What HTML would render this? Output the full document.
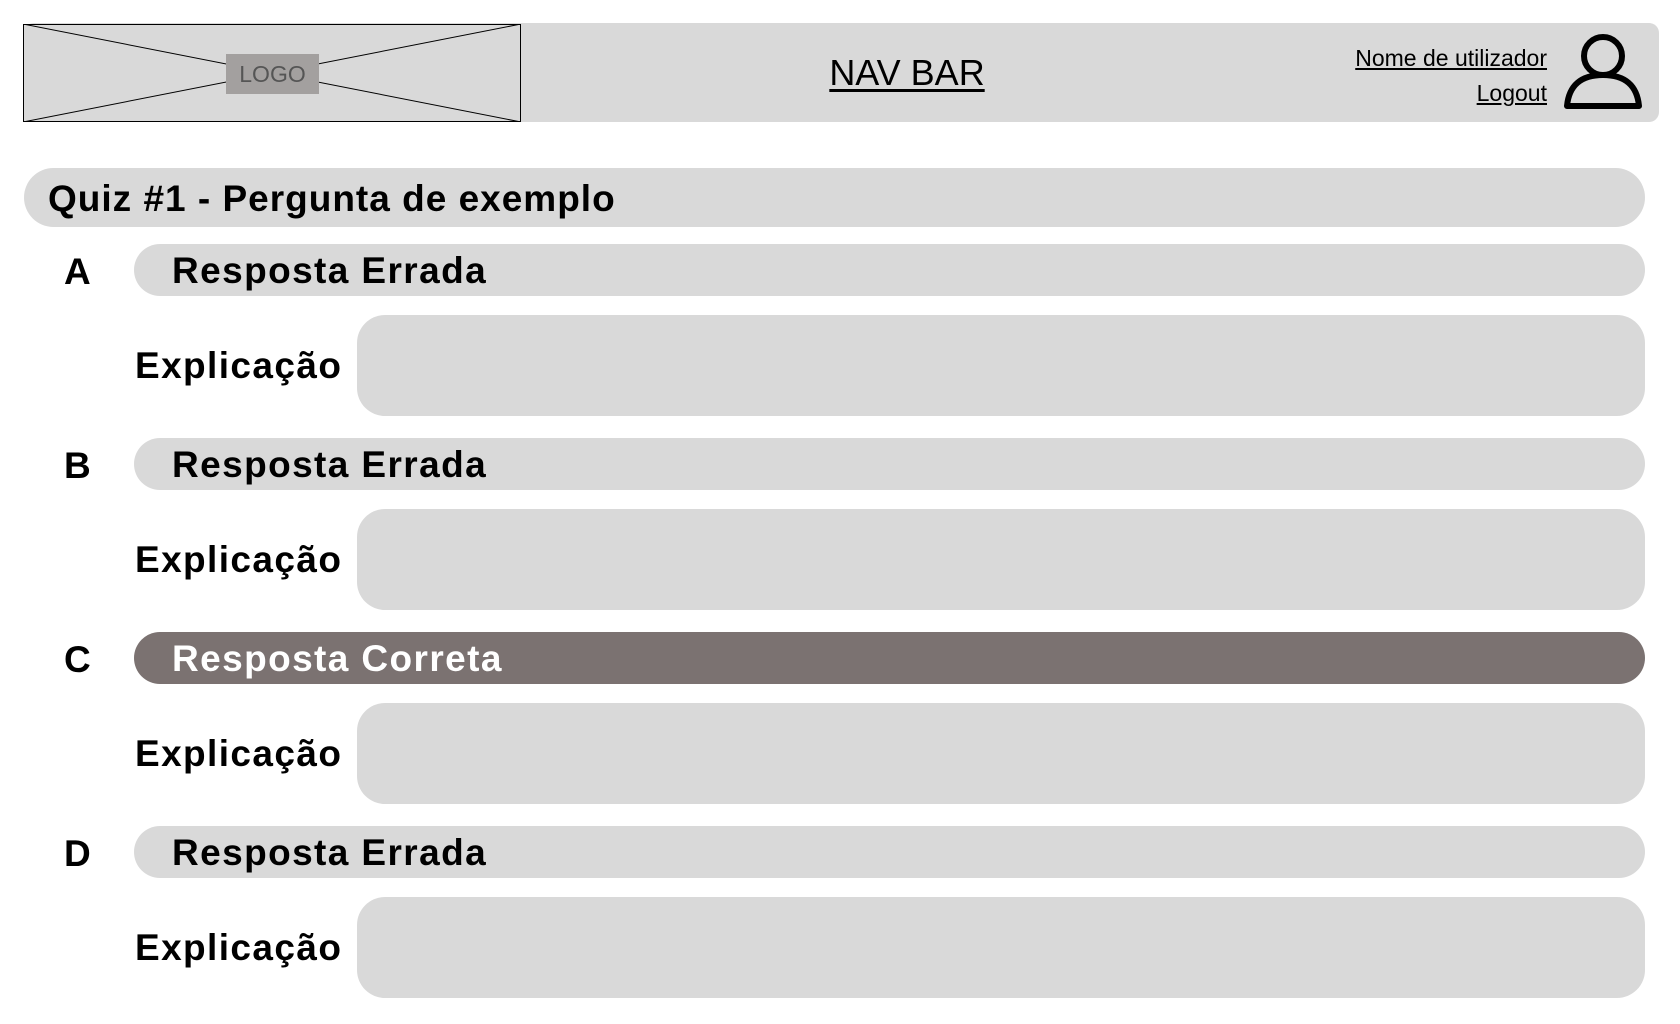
<!DOCTYPE html>
<html><head><meta charset="utf-8"><style>
*{margin:0;padding:0;box-sizing:border-box}
body{width:1680px;height:1024px;background:#fff;font-family:"Liberation Sans",sans-serif;position:relative;overflow:hidden}
.abs{position:absolute}
.nav{left:24px;top:23px;width:1635px;height:99px;background:#d9d9d9;border-radius:10px}
.logo{left:23px;top:24px;width:498px;height:98px;border:1.5px solid #000;background:#d9d9d9}
.navt{left:700px;width:414px;top:52px;text-align:center;font-size:36px;text-decoration:underline;text-underline-offset:4px}
.user{right:133px;font-size:23px;text-decoration:underline;text-align:right}
.bar{background:#d9d9d9;border-radius:28px}
.big{font-weight:bold;font-size:37px;line-height:1;letter-spacing:1.4px}
.lab{left:64px;font-weight:bold;font-size:37px}
</style></head><body>
<div class="abs nav"></div>
<div class="abs logo">
<svg width="498" height="98" style="position:absolute;left:-1px;top:-1px"><line x1="0" y1="0" x2="498" y2="98" stroke="#000" stroke-width="1"/><line x1="0" y1="98" x2="498" y2="0" stroke="#000" stroke-width="1"/></svg>
<div style="position:absolute;left:202px;top:29px;width:93px;height:40px;background:#a3a09f;color:#555;font-size:23px;text-align:center;line-height:40px">LOGO</div>
</div>
<div class="abs navt">NAV BAR</div>
<div class="abs user" style="top:45px">Nome de utilizador</div>
<div class="abs user" style="top:80px">Logout</div>
<svg class="abs" style="left:1562px;top:32px" width="84" height="80"><circle cx="41" cy="24" r="19" fill="none" stroke="#000" stroke-width="6"/><path d="M5 74 Q8 43 41 43 Q74 43 77 74 Z" fill="none" stroke="#000" stroke-width="6" stroke-linejoin="round"/></svg>

<div class="abs bar" style="left:24px;top:168px;width:1621px;height:59px;border-radius:30px"></div>
<div class="abs big" style="left:48px;top:180px;letter-spacing:1px">Quiz #1 - Pergunta de exemplo</div>

<div class="abs lab" style="top:251px">A</div>
<div class="abs bar" style="left:134px;top:244px;width:1511px;height:52px"></div>
<div class="abs big" style="left:172px;top:252px">Resposta Errada</div>
<div class="abs big" style="left:135px;top:347px">Explicação</div>
<div class="abs bar" style="left:357px;top:315px;width:1288px;height:101px"></div>

<div class="abs lab" style="top:445px">B</div>
<div class="abs bar" style="left:134px;top:438px;width:1511px;height:52px"></div>
<div class="abs big" style="left:172px;top:446px">Resposta Errada</div>
<div class="abs big" style="left:135px;top:541px">Explicação</div>
<div class="abs bar" style="left:357px;top:509px;width:1288px;height:101px"></div>

<div class="abs lab" style="top:639px">C</div>
<div class="abs bar" style="left:134px;top:632px;width:1511px;height:52px;background:#7b7271"></div>
<div class="abs big" style="left:172px;top:640px;color:#fff">Resposta Correta</div>
<div class="abs big" style="left:135px;top:735px">Explicação</div>
<div class="abs bar" style="left:357px;top:703px;width:1288px;height:101px"></div>

<div class="abs lab" style="top:833px">D</div>
<div class="abs bar" style="left:134px;top:826px;width:1511px;height:52px"></div>
<div class="abs big" style="left:172px;top:834px">Resposta Errada</div>
<div class="abs big" style="left:135px;top:929px">Explicação</div>
<div class="abs bar" style="left:357px;top:897px;width:1288px;height:101px"></div>
</body></html>
